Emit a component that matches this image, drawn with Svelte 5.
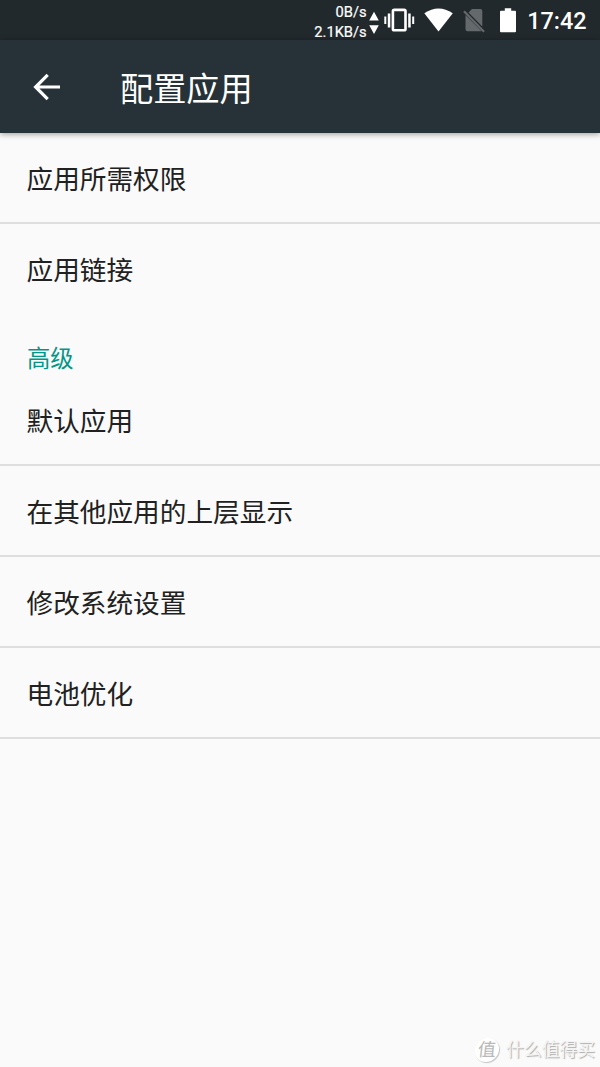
<script>
  const general = ['应用所需权限', '应用链接'];
  const advanced = ['默认应用', '在其他应用的上层显示', '修改系统设置', '电池优化'];
</script>

<div class="screen">
  <div class="status-bar">
    <div class="speed">
      <span>0B/s</span>
      <span>2.1KB/s</span>
    </div>
    <svg class="arrows" width="10" height="24" viewBox="0 0 10 24">
      <path d="M0.2 9.4L5 0.8L9.8 9.4ZM0.2 14.2L5 23L9.8 14.2Z" />
    </svg>
    <svg class="vibrate" width="31" height="24" viewBox="0 0 31 24">
      <path d="M0.3 8.5H2.3V16H0.3ZM3.8 5.5H6.3V19.5H3.8ZM24.2 5.5H26.7V19.5H24.2ZM28.2 8.5H30.2V16H28.2Z" />
      <rect x="8.9" y="1.9" width="12.6" height="20.4" rx="1.4" />
    </svg>
    <svg class="wifi" width="30" height="24" viewBox="0 0 30 24">
      <path d="M0.3 5.3Q14.5-4.3 28.8 5.3L14.5 23.5Z" />
    </svg>
    <svg class="no-sim" width="22" height="26" viewBox="0 0 22 26">
      <path d="M9 1H17.3Q19.3 1 19.3 3V18.6L5.5 4.6ZM2.5 7L18.4 23Q18 23.2 17.3 23.2H4.5Q2.5 23.2 2.5 21.2Z" />
      <path class="slash" d="M1 3.2L21 23.8" />
    </svg>
    <svg class="battery" width="16" height="25" viewBox="0 0 16 25">
      <path d="M4.8 0.2H11.2V2.7H15Q16 2.7 16 3.7V23.2Q16 24.2 15 24.2H1Q0 24.2 0 23.2V3.7Q0 2.7 1 2.7H4.8Z" />
    </svg>
    <span class="clock">17:42</span>
  </div>

  <header class="toolbar">
    <svg class="back" width="28" height="28" viewBox="0 0 28 28">
      <path d="M27 14H3M14.7 1.9L2.6 14L14.7 26.1" />
    </svg>
    <h1>配置应用</h1>
  </header>

  <main>
    {#each general as item, i}
      <div class="row" class:divided={i < general.length - 1}>{item}</div>
    {/each}
    <h2>高级</h2>
    {#each advanced as item}
      <div class="row divided">{item}</div>
    {/each}
  </main>

  <div class="watermark">
    <span class="badge">值</span>
    <span class="brand">什么值得买</span>
  </div>
</div>

<style>
  :global(body) { margin: 0; background: #fafafa; }

  .screen {
    position: relative; width: 600px; height: 1067px; overflow: hidden;
    display: flex; flex-direction: column; background: #fafafa; color: #212121;
    font-family: Roboto, "Noto Sans CJK SC", sans-serif;
  }

  .status-bar {
    height: 40px; box-sizing: border-box; padding-right: 13.5px; flex: none;
    display: flex; align-items: center; justify-content: flex-end;
    background: #22292d; color: #fff;
  }
  .status-bar svg { fill: #fff; flex: none; }
  .speed {
    display: flex; flex-direction: column; align-items: flex-end;
    font-size: 14.7px; line-height: 20px; margin: 4px 2px 0 0;
    -webkit-text-stroke: 0.2px #fff;
  }
  .arrows { margin: 5px 5px 0 0; }
  .vibrate { margin-right: 9px; }
  .vibrate rect { fill: none; stroke: #fff; stroke-width: 2.6; }
  .wifi { margin-right: 9px; }
  .status-bar .no-sim { fill: #64696c; margin: 1px 15px 0 0; }
  .no-sim .slash { stroke: #64696c; stroke-width: 2.2; }
  .battery { margin-right: 11.5px; }
  .clock { font-size: 23.4px; font-weight: 500; line-height: 28px; margin-top: 2px; }

  .toolbar {
    height: 93px; flex: none; display: flex; align-items: center;
    background: #263238; color: #fff; box-shadow: 0 1px 6px rgba(0,0,0,0.4);
    z-index: 1;
  }
  .back { margin: 0 59px 0 33px; }
  .back path { fill: none; stroke: #fff; stroke-width: 3.2; }
  h1 { margin: 6px 0 0; font-size: 33.2px; font-weight: 400; line-height: 48px; }

  .row {
    height: 91px; box-sizing: border-box; padding: 0 27px 1px 26.5px;
    display: flex; align-items: center; font-size: 26.67px;
    border-bottom: 2px solid transparent;
  }
  .divided { border-bottom-color: #dedede; }
  h2 {
    height: 60px; box-sizing: border-box; margin: 0; padding: 27px 27px 0;
    font-size: 23.3px; line-height: 34px; font-weight: 400; color: #009688;
  }

  .watermark {
    position: absolute; right: 5px; bottom: 4px;
    display: flex; align-items: center; gap: 7px; color: #f4f4f4;
    text-shadow: 1px 1px 1px #aaa;
  }
  .badge {
    width: 24px; height: 24px; border-radius: 50%; background: #fff;
    box-shadow: 1px 1px 1px #c4c4c4; color: #b8b8b8; text-shadow: none;
    font-size: 18px; font-weight: 400; line-height: 23px; text-align: center;
    transform: skewX(-6deg);
  }
  .brand { font-size: 17.8px; line-height: 26px; }
</style>
